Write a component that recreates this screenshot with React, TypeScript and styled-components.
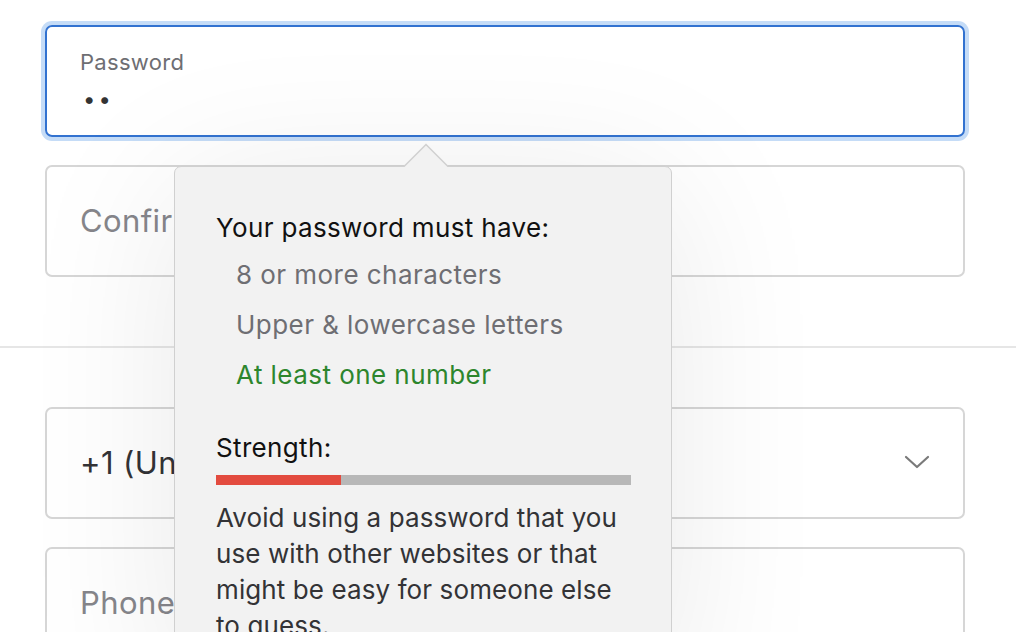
import React from "react";
import styled, { createGlobalStyle } from "styled-components";

const Global = createGlobalStyle`
  html, body { margin: 0; padding: 0; background: #ffffff; }
  body { font-family: Inter, "Noto Sans", "Liberation Sans", sans-serif; overflow: hidden; }
  * { box-sizing: border-box; }
`;

const Page = styled.div`
  position: relative;
  width: 1016px;
  height: 632px;
  overflow: hidden;
  background: #ffffff;
`;

const Section = styled.div<{ $top: number; $bottom: number }>`
  display: flex;
  flex-direction: column;
  gap: 28px;
  padding: ${(p) => p.$top}px 51px ${(p) => p.$bottom}px 45px;
`;

const Divider = styled.div`
  height: 2px;
  background: #e6e6e6;
`;

const Field = styled.div<{ $focused?: boolean }>`
  height: 112px;
  border-radius: 7px;
  border: 2px solid ${(p) => (p.$focused ? "#3272d0" : "#d6d6d6")};
  box-shadow: ${(p) => (p.$focused ? "0 0 0 4px #c5dcf7" : "none")};
  background: transparent;
  display: flex;
  flex-direction: column;
  justify-content: center;
  padding: 0 33px;
  position: relative;
`;

const FloatLabel = styled.div`
  font-size: 22px;
  line-height: 26px;
  letter-spacing: 0.3px;
  color: #6e6e73;
  margin-top: -2px;
`;

const Dots = styled.div`
  font-size: 22px;
  line-height: 26px;
  color: #333333;
  letter-spacing: 3px;
  margin-top: 11px;
  padding-left: 3px;
`;

const Placeholder = styled.div<{ $dark?: boolean }>`
  font-size: 31px;
  line-height: 36px;
  letter-spacing: 0.4px;
  color: ${(p) => (p.$dark ? "#333336" : "#86868b")};
`;

const SelectRow = styled.div`
  display: flex;
  align-items: center;
  justify-content: space-between;
`;

const Chevron = styled.svg`
  width: 26px;
  height: 16px;
  margin-top: -2px;
`;

const Popover = styled.div`
  position: absolute;
  left: 174px;
  top: 166px;
  width: 498px;
  padding: 46px 40px 40px 41px;
  background: #f2f2f2;
  border: 1px solid #d0d0d0;
  border-radius: 7px;
  box-shadow: 0 20px 160px rgba(0, 0, 0, 0.09);
  color: #1d1d1f;
`;

const Arrow = styled.svg`
  position: absolute;
  left: 228px;
  top: -24px;
  width: 46px;
  height: 25px;
`;

const Heading = styled.div`
  font-size: 26px;
  line-height: 30px;
  letter-spacing: 0.35px;
  color: #111111;
  margin-bottom: 7px;
`;

const ReqList = styled.ul`
  list-style: none;
  margin: 0;
  padding: 0 0 0 20px;
`;

const Req = styled.li<{ $met?: boolean }>`
  font-size: 26px;
  line-height: 50px;
  letter-spacing: 0.45px;
  color: ${(p) => (p.$met ? "#2d862d" : "#6e6e73")};
`;

const StrengthLabel = styled.div`
  margin-top: 33px;
  font-size: 26px;
  line-height: 30px;
  letter-spacing: 0.35px;
  color: #111111;
`;

const Bar = styled.div`
  margin-top: 12px;
  height: 10px;
  background: #b8b8b8;
  display: flex;
`;

const BarFill = styled.div`
  height: 100%;
  background: #e34b3f;
`;

const Advice = styled.p`
  margin: 15px 0 0;
  font-size: 26px;
  line-height: 36px;
  letter-spacing: 0.1px;
  color: #333336;
`;

export default function App() {
  const strength = 0.3;
  return (
    <Page>
      <Global />
      <Section $top={25} $bottom={69}>
        <Field $focused>
          <FloatLabel>Password</FloatLabel>
          <Dots>••</Dots>
        </Field>
        <Field>
          <Placeholder>Confirm password</Placeholder>
        </Field>
      </Section>
      <Divider />
      <Section $top={59} $bottom={0}>
        <Field>
          <SelectRow>
            <Placeholder $dark>+1 (United States)</Placeholder>
            <Chevron viewBox="0 0 26 16">
              <path d="M2 3 L13 13 L24 3" fill="none" stroke="#7a7a7a" strokeWidth="2.2" strokeLinecap="round" strokeLinejoin="round" />
            </Chevron>
          </SelectRow>
        </Field>
        <Field>
          <Placeholder>Phone number</Placeholder>
        </Field>
      </Section>
      <Popover>
        <Arrow viewBox="0 0 46 25">
          <path d="M0 24.5 L23 1.5 L46 24.5" fill="#f2f2f2" stroke="#d0d0d0" strokeWidth="1.5" />
          <rect x="0" y="24" width="46" height="2" fill="#f2f2f2" />
        </Arrow>
        <Heading>Your password must have:</Heading>
        <ReqList>
          <Req>8 or more characters</Req>
          <Req>Upper &amp; lowercase letters</Req>
          <Req $met>At least one number</Req>
        </ReqList>
        <StrengthLabel>Strength:</StrengthLabel>
        <Bar>
          <BarFill style={{ width: `${strength * 100}%` }} />
        </Bar>
        <Advice>
          Avoid using a password that you use with other websites or that might be easy for someone else to guess.
        </Advice>
      </Popover>
    </Page>
  );
}
